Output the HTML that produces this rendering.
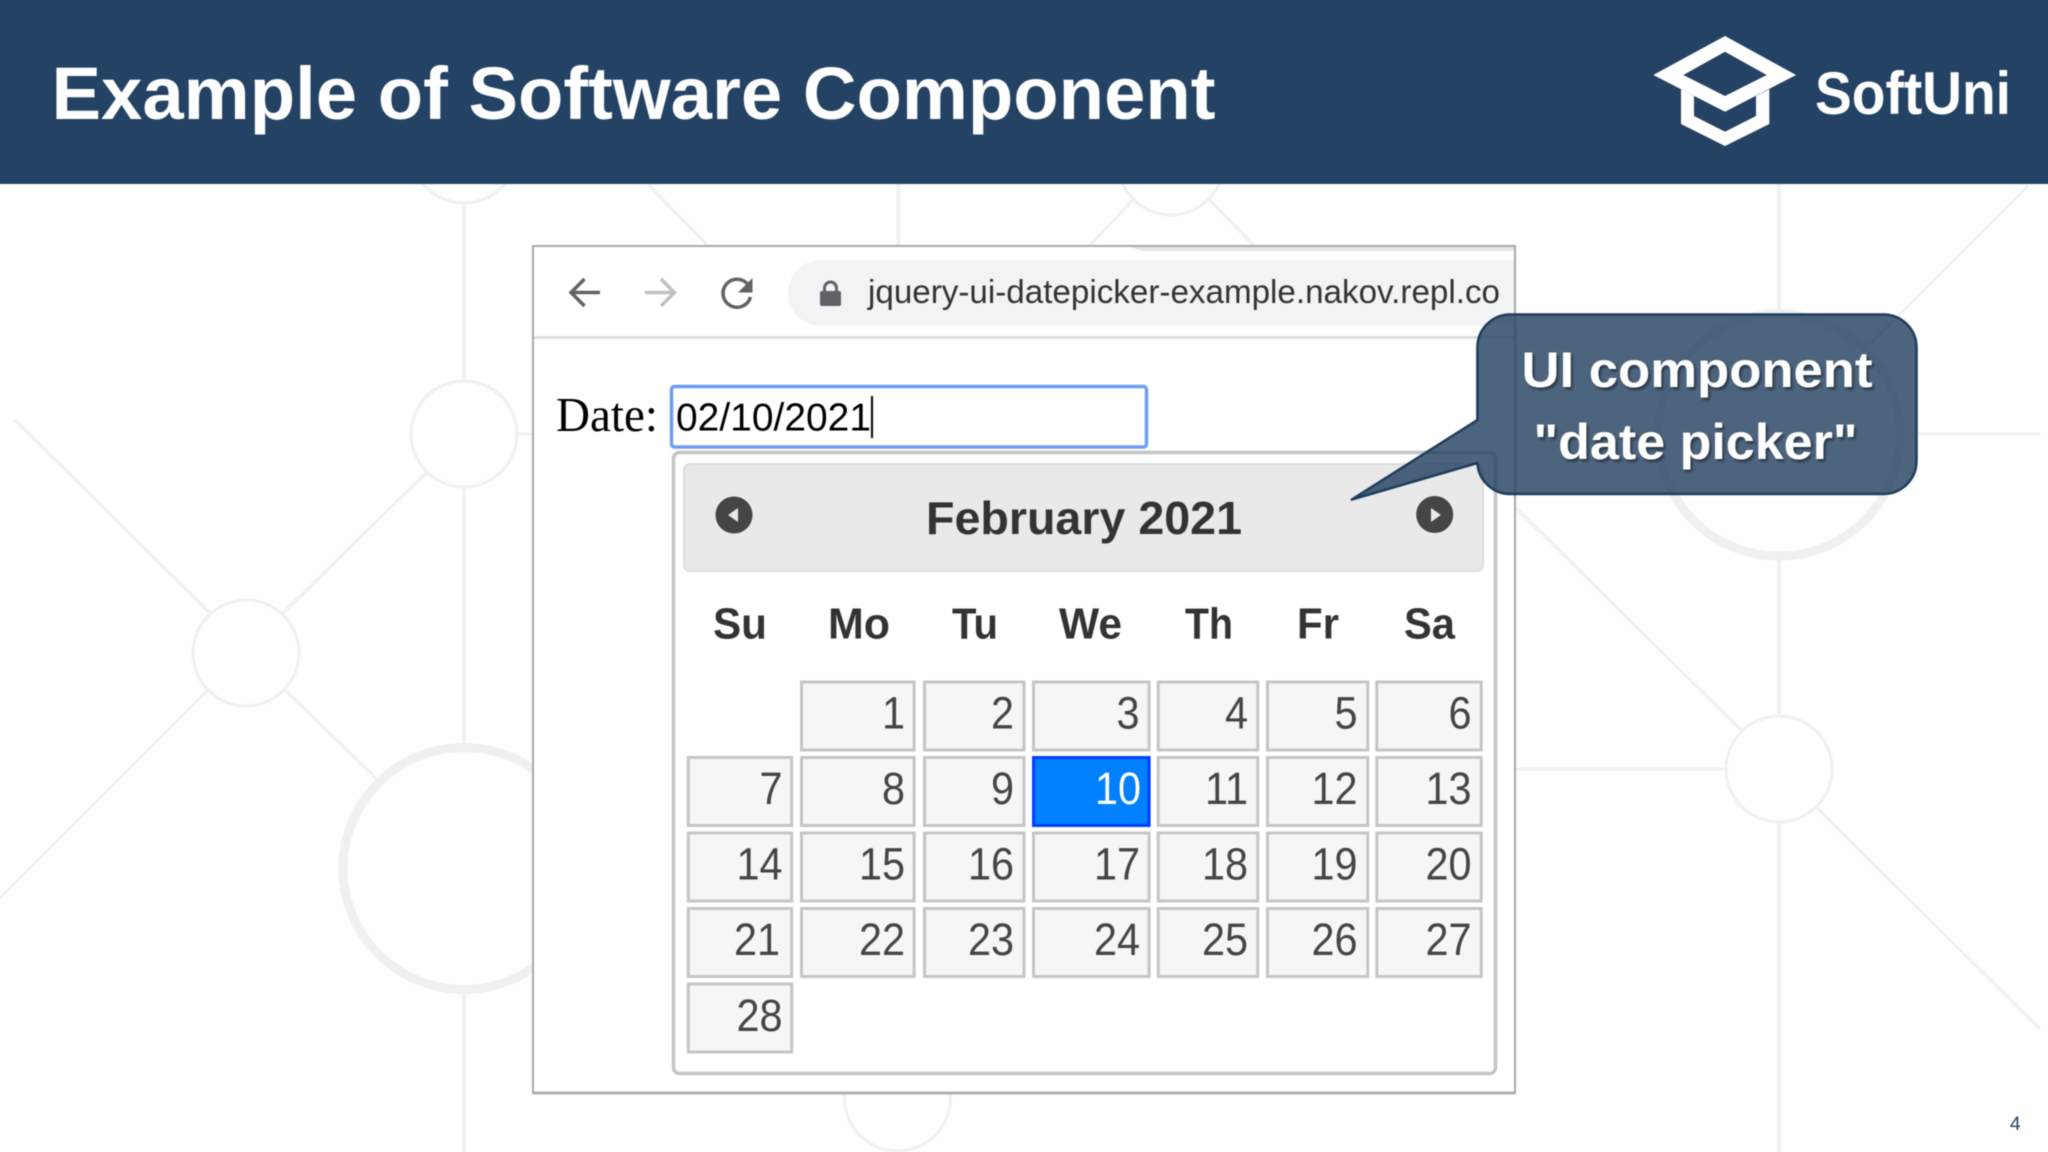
<!DOCTYPE html>
<html lang="en">
<head>
<meta charset="utf-8">
<title>Example of Software Component</title>
<style>
html,body{margin:0;padding:0;background:#fefefe;width:2048px;height:1152px;overflow:hidden}
#wrap{position:relative;width:2048px;height:1152px;overflow:hidden;contain:paint}
svg{display:block;position:absolute;left:-10px;top:-10px;filter:blur(.45px)}
text{font-family:"Liberation Sans",Arial,sans-serif}
.bg{fill:none;stroke:#f0f0f3}
.c{fill:#f6f6f6;stroke:#c5c5c5;stroke-width:3}
.d{font-size:45px;fill:#454545;text-anchor:end}
.w{font-size:43.5px;font-weight:bold;fill:#333}
</style>
</head>
<body>
<div id="wrap">
<svg width="2068" height="1172" viewBox="-10 -10 2068 1172" xmlns="http://www.w3.org/2000/svg">
<defs>
<filter id="sh" x="-10%" y="-20%" width="120%" height="150%"><feDropShadow dx="2" dy="2.5" stdDeviation="1.2" flood-color="#000" flood-opacity=".45"/></filter>
</defs>
<rect x="-10" y="-10" width="2068" height="1172" fill="#fefefe"/>

<!-- background network -->
<g class="bg" stroke-width="3.5">
<path d="M464 204V380M464 488V743M464 994V1162"/>
<path d="M1779 184V310M1779 559V714M1779 823V1162"/>
<path d="M898.5 184V246"/>
</g>
<g class="bg" stroke-width="3">
<circle cx="464" cy="150" r="53"/>
<circle cx="464" cy="434" r="53"/>
<circle cx="246" cy="653" r="53"/>
<circle cx="1779" cy="769" r="53"/>
<circle cx="1171" cy="162" r="53"/>
<circle cx="897.5" cy="1098" r="53"/>
<path d="M15 420L210 613M283 613L427 472M-8 906L208 690M285 690L382 784"/>
<path d="M518 434H533M1516 769H1724M1919 434H2040M1516 508L1741 730M1816 807L2040 1029M2028 186L1866 348"/>
<path d="M648 184L708 246M1133 200L1089 246M1210 200L1254 246"/>
</g>
<g class="bg" stroke-width="9">
<circle cx="464" cy="868.5" r="121"/>
<circle cx="1779" cy="435" r="121"/>
</g>

<!-- header -->
<rect x="-10" y="-10" width="2068" height="194" fill="#244364"/>
<text x="51.5" y="119" font-size="74" font-weight="bold" fill="#fff" textLength="1164" lengthAdjust="spacingAndGlyphs">Example of Software Component</text>

<!-- logo -->
<path fill="#fff" fill-rule="evenodd" d="M1653.3 75L1725 36L1796 75L1725 111.7ZM1683.3 75L1725 96L1766.7 75L1725 51.7Z"/>
<path fill="#fff" d="M1681 89.3V124L1725 146L1769.3 124V89.3L1756 96V116L1725 131.7L1694 116V96Z"/>
<text x="1815" y="114" font-size="60" font-weight="bold" fill="#fff" textLength="196" lengthAdjust="spacingAndGlyphs">SoftUni</text>

<!-- browser frame -->
<rect x="533" y="246" width="982" height="847" fill="#fff" stroke="#a9a9a9" stroke-width="2"/>
<path d="M533 1093H1515" stroke="#b0b0b0" stroke-width="3"/>
<path d="M1130 247H1514V251H1142Z" fill="#e6e6e6"/>
<path d="M534 337.5H1514" stroke="#e0e0e0" stroke-width="3"/>
<path d="M1514 260H821a33 33 0 0 0 0 66H1514Z" fill="#f1f3f4"/>

<!-- toolbar icons -->
<path d="M600 292.5H572M584.5 279L571 292.5L584.5 306" fill="none" stroke="#5f6368" stroke-width="3.5"/>
<path d="M645 292.5H673M661 279L674.5 292.5L661 306" fill="none" stroke="#bdc1c6" stroke-width="3.5"/>
<path d="M747.5 284A14 14 0 1 0 750.5 297" fill="none" stroke="#5f6368" stroke-width="3.5"/>
<path d="M752.5 278V292.5H738Z" fill="#5f6368"/>
<rect x="820" y="291" width="21" height="15" rx="2" fill="#5f6368"/>
<path d="M824.5 292V288a6 6 0 0 1 12 0V292" fill="none" stroke="#5f6368" stroke-width="3"/>
<text x="868" y="303" font-size="33" fill="#333" textLength="632" lengthAdjust="spacingAndGlyphs">jquery-ui-datepicker-example.nakov.repl.co</text>

<!-- date field -->
<text x="556" y="431" font-size="49" fill="#000" style="font-family:'Liberation Serif',serif" textLength="102" lengthAdjust="spacingAndGlyphs">Date:</text>

<!-- datepicker -->
<rect x="673.5" y="452.5" width="822" height="621" rx="6" fill="#fff" stroke="#c5c5c5" stroke-width="3.5"/>
<rect x="684" y="464" width="799" height="107" rx="6" fill="#e9e9e9" stroke="#dddddd" stroke-width="2"/>
<rect x="671.5" y="386.5" width="475" height="60.5" rx="3" fill="#fff" stroke="#6c9ef2" stroke-width="3.5"/>
<text x="676" y="430.5" font-size="39" fill="#000" textLength="195" lengthAdjust="spacingAndGlyphs">02/10/2021</text>
<rect x="871" y="396" width="2" height="42" fill="#000"/>

<ellipse cx="734" cy="515" rx="18.5" ry="18.5" fill="#454545"/>
<path d="M728 515L738 508V522Z" fill="#e9e9e9"/>
<ellipse cx="1434.7" cy="514.5" rx="18.5" ry="18.5" fill="#454545"/>
<path d="M1431 508V522L1441 515Z" fill="#e9e9e9"/>
<text x="926" y="534" font-size="46.5" font-weight="bold" fill="#333" textLength="316" lengthAdjust="spacingAndGlyphs">February 2021</text>

<text class="w" x="713" y="638.5" textLength="54" lengthAdjust="spacingAndGlyphs">Su</text>
<text class="w" x="828" y="638.5" textLength="62" lengthAdjust="spacingAndGlyphs">Mo</text>
<text class="w" x="952" y="638.5" textLength="46" lengthAdjust="spacingAndGlyphs">Tu</text>
<text class="w" x="1059" y="638.5" textLength="63" lengthAdjust="spacingAndGlyphs">We</text>
<text class="w" x="1185" y="638.5" textLength="48" lengthAdjust="spacingAndGlyphs">Th</text>
<text class="w" x="1297" y="638.5" textLength="42" lengthAdjust="spacingAndGlyphs">Fr</text>
<text class="w" x="1404" y="638.5" textLength="51" lengthAdjust="spacingAndGlyphs">Sa</text>

<!-- row 0 cells -->
<rect class="c" x="801.5" y="682" width="112.6" height="68"/>
<rect class="c" x="924.5" y="682" width="99.5" height="68"/>
<rect class="c" x="1033.5" y="682" width="115.6" height="68"/>
<rect class="c" x="1158.2" y="682" width="99.6" height="68"/>
<rect class="c" x="1267.5" y="682" width="100.3" height="68"/>
<rect class="c" x="1376.8" y="682" width="104.4" height="68"/>
<!-- row 1 -->
<rect class="c" x="688.3" y="757.5" width="103.4" height="68"/>
<rect class="c" x="801.5" y="757.5" width="112.6" height="68"/>
<rect class="c" x="924.5" y="757.5" width="99.5" height="68"/>
<rect x="1033.5" y="757.5" width="115.6" height="68" fill="#007fff" stroke="#003eff" stroke-width="3"/>
<rect class="c" x="1158.2" y="757.5" width="99.6" height="68"/>
<rect class="c" x="1267.5" y="757.5" width="100.3" height="68"/>
<rect class="c" x="1376.8" y="757.5" width="104.4" height="68"/>
<!-- row 2 -->
<rect class="c" x="688.3" y="833" width="103.4" height="68"/>
<rect class="c" x="801.5" y="833" width="112.6" height="68"/>
<rect class="c" x="924.5" y="833" width="99.5" height="68"/>
<rect class="c" x="1033.5" y="833" width="115.6" height="68"/>
<rect class="c" x="1158.2" y="833" width="99.6" height="68"/>
<rect class="c" x="1267.5" y="833" width="100.3" height="68"/>
<rect class="c" x="1376.8" y="833" width="104.4" height="68"/>
<!-- row 3 -->
<rect class="c" x="688.3" y="908.5" width="103.4" height="68"/>
<rect class="c" x="801.5" y="908.5" width="112.6" height="68"/>
<rect class="c" x="924.5" y="908.5" width="99.5" height="68"/>
<rect class="c" x="1033.5" y="908.5" width="115.6" height="68"/>
<rect class="c" x="1158.2" y="908.5" width="99.6" height="68"/>
<rect class="c" x="1267.5" y="908.5" width="100.3" height="68"/>
<rect class="c" x="1376.8" y="908.5" width="104.4" height="68"/>
<!-- row 4 -->
<rect class="c" x="688.3" y="984" width="103.4" height="68"/>

<g transform="translate(1 0)">
<text class="d" transform="translate(904 728.5) scale(.92 1)">1</text>
<text class="d" transform="translate(1013 728.5) scale(.92 1)">2</text>
<text class="d" transform="translate(1138.5 728.5) scale(.92 1)">3</text>
<text class="d" transform="translate(1247 728.5) scale(.92 1)">4</text>
<text class="d" transform="translate(1356.5 728.5) scale(.92 1)">5</text>
<text class="d" transform="translate(1470.5 728.5) scale(.92 1)">6</text>

<text class="d" transform="translate(781.5 804) scale(.92 1)">7</text>
<text class="d" transform="translate(904 804) scale(.92 1)">8</text>
<text class="d" transform="translate(1013 804) scale(.92 1)">9</text>
<text class="d" style="fill:#fff" transform="translate(1140 804) scale(.92 1)">10</text>
<text class="d" transform="translate(1247 804) scale(.92 1)">11</text>
<text class="d" transform="translate(1356.5 804) scale(.92 1)">12</text>
<text class="d" transform="translate(1470.5 804) scale(.92 1)">13</text>

<text class="d" transform="translate(781.5 879.6) scale(.92 1)">14</text>
<text class="d" transform="translate(904 879.6) scale(.92 1)">15</text>
<text class="d" transform="translate(1013 879.6) scale(.92 1)">16</text>
<text class="d" transform="translate(1139 879.6) scale(.92 1)">17</text>
<text class="d" transform="translate(1247 879.6) scale(.92 1)">18</text>
<text class="d" transform="translate(1356.5 879.6) scale(.92 1)">19</text>
<text class="d" transform="translate(1470.5 879.6) scale(.92 1)">20</text>

<text class="d" transform="translate(779 955.2) scale(.92 1)">21</text>
<text class="d" transform="translate(904 955.2) scale(.92 1)">22</text>
<text class="d" transform="translate(1013 955.2) scale(.92 1)">23</text>
<text class="d" transform="translate(1139 955.2) scale(.92 1)">24</text>
<text class="d" transform="translate(1247 955.2) scale(.92 1)">25</text>
<text class="d" transform="translate(1356.5 955.2) scale(.92 1)">26</text>
<text class="d" transform="translate(1470.5 955.2) scale(.92 1)">27</text>

<text class="d" transform="translate(781.5 1030.8) scale(.92 1)">28</text>
</g>

<!-- callout -->
<path d="M1510.4 314.5H1883.5a33 33 0 0 1 33 33V461a33 33 0 0 1-33 33H1510.4a33 33 0 0 1-33-31L1351.8 499.5L1477.4 420V347.5a33 33 0 0 1 33-33Z" fill="#244060" fill-opacity=".81" stroke="#1f3d5c" stroke-width="2.5" stroke-linejoin="round"/>
<g filter="url(#sh)">
<text x="1521.5" y="387" font-size="50" font-weight="bold" fill="#fff" textLength="351" lengthAdjust="spacingAndGlyphs">UI component</text>
<text x="1533.5" y="459" font-size="50" font-weight="bold" fill="#fff" textLength="324" lengthAdjust="spacingAndGlyphs">"date picker"</text>
</g>

<!-- page number -->
<text x="2010" y="1130" font-size="19" fill="#234465">4</text>
</svg>
</div>
</body>
</html>
